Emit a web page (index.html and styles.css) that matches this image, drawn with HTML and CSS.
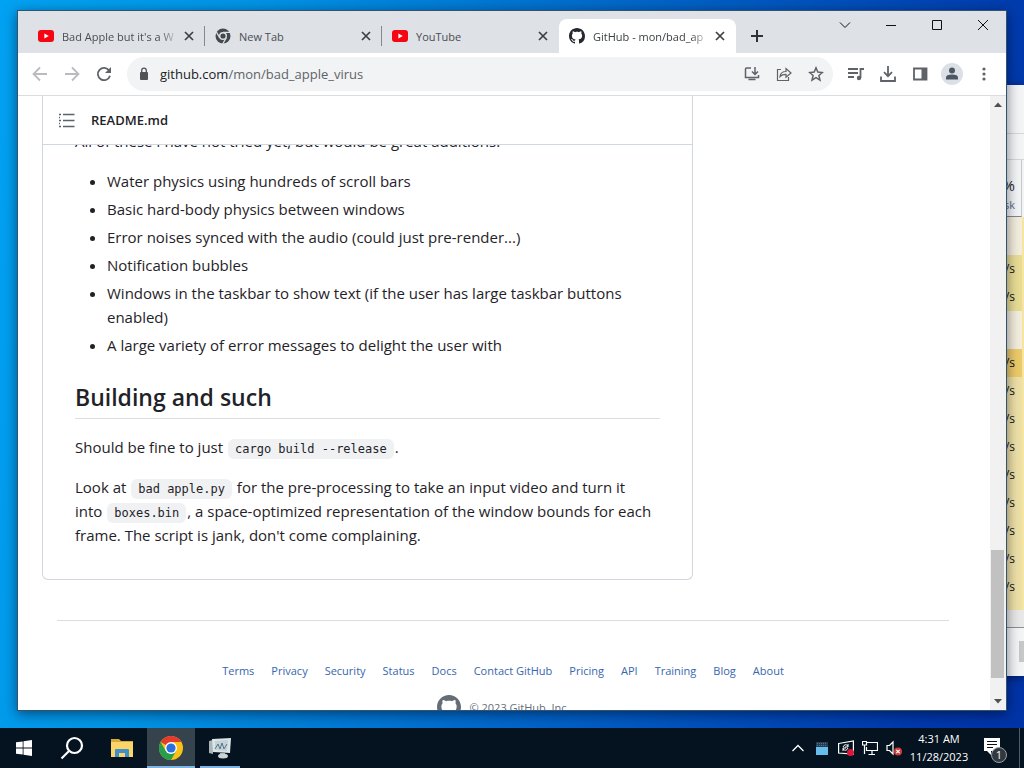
FILE: index.html
```html
<!DOCTYPE html>
<html lang="en">
<head>
<meta charset="utf-8">
<title>GitHub - mon/bad_apple_virus</title>
<link rel="stylesheet" href="styles.css">
</head>
<body>
<svg class="sprite" aria-hidden="true">
  <symbol id="youtube" viewBox="0 0 16 16"><rect y="2" width="16" height="12" rx="3" fill="#f40612"/><path d="M6.4 5.4v5.2L10.8 8z" fill="#fff"/></symbol>
  <symbol id="close" viewBox="0 0 16 16"><path d="M4 4l8 8M12 4l-8 8" stroke="#3c4043" stroke-width="1.7" fill="none"/></symbol>
  <symbol id="octocat" viewBox="0 0 16 16"><path fill="currentColor" d="M8 0C3.58 0 0 3.58 0 8c0 3.54 2.29 6.53 5.47 7.59.4.07.55-.17.55-.38 0-.19-.01-.82-.01-1.49-2.01.37-2.53-.49-2.69-.94-.09-.23-.48-.94-.82-1.13-.28-.15-.68-.52-.01-.53.63-.01 1.08.58 1.23.82.72 1.21 1.87.87 2.33.66.07-.52.28-.87.51-1.07-1.78-.2-3.64-.89-3.64-3.95 0-.87.31-1.59.82-2.15-.08-.2-.36-1.02.08-2.12 0 0 .67-.21 2.2.82.64-.18 1.32-.27 2-.27s1.36.09 2 .27c1.53-1.04 2.2-.82 2.2-.82.44 1.1.16 1.92.08 2.12.51.56.82 1.27.82 2.15 0 3.07-1.87 3.75-3.65 3.95.29.25.54.73.54 1.48 0 1.07-.01 1.93-.01 2.2 0 .21.15.46.55.38A8.01 8.01 0 0 0 16 8c0-4.42-3.58-8-8-8z"/></symbol>
</svg>

<div class="screen">
  <main class="desktop">
    <section class="monitor" aria-label="Resource monitor">
      <div class="monitor-top"></div>
      <div class="monitor-bar"></div>
      <div class="monitor-head"><span class="percent">%</span><span class="label">sk</span></div>
      <div class="cell pale"></div>
      <div class="cell mid">/s</div>
      <div class="cell mid">/s</div>
      <div class="cell pale"></div>
      <div class="cell hot">/s</div>
      <div class="cell">/s</div>
      <div class="cell">/s</div>
      <div class="cell">/s</div>
      <div class="cell">/s</div>
      <div class="cell">/s</div>
      <div class="cell">/s</div>
      <div class="cell">/s</div>
      <div class="cell">/s</div>
      <div class="cell rest"></div>
      <div class="monitor-scroll"></div>
      <div class="monitor-foot"><span class="stub"></span></div>
    </section>

    <section class="browser" aria-label="Browser">
      <header class="tabstrip">
        <div class="tabs">
          <div class="tab"><svg class="i16"><use href="#youtube"/></svg><span class="tab-title fade">Bad Apple but it's a W</span><button class="tab-close" aria-label="Close tab"><svg class="i16"><use href="#close"/></svg></button></div>
          <div class="tab"><svg class="i16" viewBox="0 0 16 16"><circle cx="8" cy="8" r="7.5" fill="#45494d"/><circle cx="8" cy="8" r="3.3" fill="#45494d" stroke="#dee1e6" stroke-width="1.4"/><path d="M8 4.3h7M4.8 9.9L1.3 3.9M11.2 9.9l-3.5 6" stroke="#dee1e6" stroke-width="1.2"/></svg><span class="tab-title">New Tab</span><button class="tab-close" aria-label="Close tab"><svg class="i16"><use href="#close"/></svg></button></div>
          <div class="tab"><svg class="i16"><use href="#youtube"/></svg><span class="tab-title">YouTube</span><button class="tab-close" aria-label="Close tab"><svg class="i16"><use href="#close"/></svg></button></div>
          <div class="tab active"><svg class="i16"><use href="#octocat"/></svg><span class="tab-title fade">GitHub - mon/bad_ap</span><button class="tab-close" aria-label="Close tab"><svg class="i16"><use href="#close"/></svg></button></div>
          <button class="new-tab" aria-label="New tab"><svg class="i16" viewBox="0 0 16 16"><path d="M8 2v12M2 8h12" stroke="#2f3235" stroke-width="2"/></svg></button>
        </div>
        <div class="caption">
          <button aria-label="Search tabs"><svg class="i16" viewBox="0 0 16 16"><path d="M3 5.500l5 5 5-5"/></svg></button>
          <button aria-label="Minimize"><svg class="i16" viewBox="0 0 16 16"><path d="M3 8.500h10"/></svg></button>
          <button aria-label="Maximize"><svg class="i16" viewBox="0 0 16 16"><path d="M3.500 3.500h9v9h-9z"/></svg></button>
          <button aria-label="Close"><svg class="i16" viewBox="0 0 16 16"><path d="M3 3l10 10M13 3L3 13"/></svg></button>
        </div>
      </header>

      <div class="toolbar">
        <div class="nav">
          <button class="faded" aria-label="Back"><svg class="i16" viewBox="0 0 16 16"><path d="M15 8H2M8 1.500L1.500 8 8 14.500"/></svg></button>
          <button class="faded" aria-label="Forward"><svg class="i16" viewBox="0 0 16 16"><path d="M1 8h13M8 1.500L14.500 8 8 14.500"/></svg></button>
          <button aria-label="Reload"><svg class="i16" viewBox="0 0 16 16"><path d="M13.200 4.500A6.200 6.200 0 1 0 14 9.800" stroke-width="2"/><path d="M15 1v6H9z" fill="#5f6368" stroke="none"/></svg></button>
        </div>
        <div class="omnibox">
          <svg class="lock" viewBox="0 0 10 14"><rect x="1" y="5" width="8" height="8" rx="1" fill="#4f5357"/><path d="M2.700 5V3.500a2.300 2.300 0 0 1 4.600 0V5" fill="none" stroke="#4f5357" stroke-width="1.300"/></svg>
          <div class="url" role="textbox" aria-label="Address" contenteditable="true" spellcheck="false">github.com<span class="path">/mon/bad_apple_virus</span></div>
          <button aria-label="Install"><svg class="i16" viewBox="0 0 16 16"><path d="M7 2H2.500Q1.500 2 1.500 3v8.500h13V9M11 1v7M8 5.500l3 3 3-3M4.500 13.500h7" stroke-width="1.500"/></svg></button>
          <button aria-label="Share"><svg class="i16" viewBox="0 0 16 16"><path d="M5 3.500H1.500v11h11V11M4 10.500c.5-3.500 3-5 6-5V2.500l5 4.500-5 4.300V8.300c-2.800 0-4.500.6-6 2.200z" stroke-width="1.200"/></svg></button>
          <button aria-label="Bookmark"><svg class="i16" viewBox="0 0 16 16"><path d="M8 1.800l1.800 4.300 4.600.4-3.500 3 1.100 4.600L8 11.700l-4 2.400 1.100-4.600-3.500-3 4.600-.4z" stroke-width="1.500"/></svg></button>
        </div>
        <div class="nav">
          <button aria-label="Media"><svg class="i16" viewBox="0 0 16 16"><path d="M0 3h10M0 7h10M0 11h6M12.500 12V3H16" stroke-width="1.700"/><circle cx="11" cy="12" r="2.200" fill="#5f6368" stroke="none"/></svg></button>
          <button aria-label="Downloads"><svg class="i16" viewBox="0 0 16 16"><path d="M8 0v10M4 6.200l4 4 4-4M1 10.500V15h14v-4.500" stroke-width="2"/></svg></button>
          <button aria-label="Side panel"><svg class="i16" viewBox="0 0 16 16"><path d="M2 2.500h12.500v11H2z" stroke-width="2"/><path d="M9.500 2h5v12h-5z" fill="#5f6368" stroke="none"/></svg></button>
          <button aria-label="Profile"><svg class="avatar" viewBox="0 0 22 22"><circle cx="11" cy="11" r="11" fill="#dbdfe6"/><circle cx="11" cy="7.500" r="3" fill="#4f5663"/><path d="M5 16.500v-2q0-3 6-3t6 3v2z" fill="#4f5663"/></svg></button>
          <button aria-label="Menu"><svg class="i16" viewBox="0 0 16 16"><g fill="#5f6368" stroke="none"><circle cx="8" cy="3" r="1.600"/><circle cx="8" cy="8" r="1.600"/><circle cx="8" cy="13" r="1.600"/></g></svg></button>
        </div>
      </div>

      <div class="viewport">
        <div class="page">
          <article class="readme">
            <header class="readme-head">
              <svg class="i16" viewBox="0 0 16 16"><path d="M4 2.500h11.500M4 8.500h11.500M4 14.500h11.500" stroke="#59636e" stroke-width="1.300"/><path d="M0 2.500h2M0 8.500h2M0 14.500h2M0 5.500h1M0 11.500h1" stroke="#59636e" stroke-width="1.500"/></svg>
              <span>README.md</span>
            </header>
            <div class="markdown">
              <p class="lead">All of these I have not tried yet, but would be great additions:</p>
              <ul>
                <li>Water physics using hundreds of scroll bars</li>
                <li>Basic hard-body physics between windows</li>
                <li>Error noises synced with the audio (could just pre-render...)</li>
                <li>Notification bubbles</li>
                <li>Windows in the taskbar to show text (if the user has large taskbar buttons enabled)</li>
                <li>A large variety of error messages to delight the user with</li>
              </ul>
              <h2>Building and such</h2>
              <p>Should be fine to just <code>cargo build --release</code>.</p>
              <p>Look at <code>bad apple.py</code> for the pre-processing to take an input video and turn it into&nbsp;<code>boxes.bin</code>, a space-optimized representation of the window bounds for each frame. The script is jank, don't come complaining.</p>
            </div>
          </article>
          <footer class="site-footer">
            <nav>
              <a href="#">Terms</a><a href="#">Privacy</a><a href="#">Security</a><a href="#">Status</a><a href="#">Docs</a><a href="#">Contact GitHub</a><a href="#">Pricing</a><a href="#">API</a><a href="#">Training</a><a href="#">Blog</a><a href="#">About</a>
            </nav>
            <div class="copyright"><svg class="mark"><use href="#octocat"/></svg><span>© 2023 GitHub, Inc.</span></div>
          </footer>
        </div>
        <div class="scrollbar">
          <button aria-label="Scroll up"><svg viewBox="0 0 16 17"><path d="M4 11h8L8 6.500z" fill="#505050"/></svg></button>
          <span class="before"></span><span class="thumb"></span><span class="after"></span>
          <button aria-label="Scroll down"><svg viewBox="0 0 16 17"><path d="M4 6h8l-4 4.500z" fill="#505050"/></svg></button>
        </div>
      </div>
    </section>
  </main>

  <footer class="taskbar">
    <button aria-label="Start"><svg class="i16" viewBox="0 0 16 16"><path fill="#fff" d="M0 2.300L6.700 1.400v6.200H0zM7.500 1.200L16 0v7.600H7.500zM0 8.400h6.700v6.200L0 13.700zM7.500 8.400H16V16l-8.500-1.200z"/></svg></button>
    <button aria-label="Search"><svg class="i24" viewBox="0 0 24 24"><circle cx="14.500" cy="9.500" r="7.500" fill="none" stroke="#fff" stroke-width="2.200"/><path d="M9 15l-7.500 7.500" stroke="#fff" stroke-width="2.200"/></svg></button>
    <div class="apps">
      <button aria-label="File Explorer"><svg class="i24" viewBox="0 0 24 24"><path d="M1 3h8l2 2h12v16H1z" fill="#d9a93a"/><path d="M1 6h22v15H1z" fill="#fbd567"/><path d="M5 21v-7q0-1 1-1h12q1 0 1 1v7h-4v-4H9v4z" fill="#3f8fc9"/><path d="M9 17h6v3H9z" fill="#fbd567"/></svg></button>
      <button class="open current" aria-label="Chrome"><svg class="i24" viewBox="0 0 24 24"><circle cx="12" cy="12" r="12" fill="#fbc116"/><path d="M12 12L1.600 6A12 12 0 0 1 22.400 6H12z" fill="#e33b2e"/><path d="M1.600 6A12 12 0 0 0 12 24l5.200-9L12 12l-5.200 3z" fill="#269e4b"/><circle cx="12" cy="12" r="6" fill="#fff"/><circle cx="12" cy="12" r="4.600" fill="#2b70dd"/></svg></button>
      <button class="open" aria-label="Resource Monitor"><svg class="i24" viewBox="0 0 24 24"><path d="M1 5l4-1v14l-4-1z" fill="#aab5b9"/><path d="M4 3l19-1-1 15-17-1z" fill="#dce4e6"/><path d="M7 5l13-1-1 11-12-1z" fill="#c3d2d8"/><path d="M7 13l3-5 2 5 2-6 2 6 3-5" fill="none" stroke="#5b7888"/><path d="M12 17h5v2h-5z" fill="#9eabb0"/><ellipse cx="15" cy="20" rx="5" ry="2.500" fill="#cbd3d4"/></svg></button>
    </div>
    <div class="tray">
      <button aria-label="Show hidden icons"><svg class="i16" viewBox="0 0 16 16"><path d="M2.500 11L8 5.500l5.500 5.500" fill="none" stroke="#fff" stroke-width="1.300"/></svg></button>
      <button aria-label="System usage"><svg class="i16" viewBox="0 0 16 16"><path d="M2 2h12v13H2z" fill="#65bfea"/><path d="M2 2h12v5H2z" fill="#253c55"/><path d="M3 3.500h10M3 5.500h10" stroke="#70879a" stroke-width=".7" stroke-dasharray="1 1"/></svg></button>
      <button aria-label="Update status"><svg class="i16" viewBox="0 0 16 16"><path d="M.6 3.500L15.400 1v13L.6 13z" fill="none" stroke="#fff" stroke-width="1.200"/><path d="M5 7q2-4 5-1M10 4v3H7M10 8q-2 4-5 1M5 11V8h3" fill="none" stroke="#fff"/><circle cx="12.500" cy="12.500" r="3.500" fill="#dc173b"/></svg></button>
      <button aria-label="Network"><svg class="i16" viewBox="0 0 16 16"><path d="M5 2.500h10.500v8H4.500V7M10 10.500v4M6.500 14.500H13M.5 1.500h4V5h-4zM2.500 5v9" fill="none" stroke="#fff" stroke-width="1.200"/></svg></button>
      <button aria-label="Volume"><svg class="i16" viewBox="0 0 16 16"><path d="M1 5.500h2.500L7 2v12l-3.500-3.500H1z" fill="none" stroke="#fff" stroke-width="1.200"/><circle cx="12" cy="11.500" r="4" fill="#d43c3c"/><path d="M10.300 9.800l3.400 3.400M13.700 9.800l-3.400 3.400" stroke="#fff" stroke-width="1.200"/></svg></button>
      <div class="clock"><time>4:31 AM</time><time>11/28/2023</time></div>
      <button class="notes" aria-label="Notifications"><svg viewBox="0 0 26 26"><path d="M1 3h16v13H8v4l-4-4H1z" fill="#fff"/><path d="M4 6.500h10M4 9.500h10M4 12.500h6" stroke="#09121b" stroke-width="1.200"/></svg><span class="badge">1</span></button>
      <span class="peek"></span>
    </div>
  </footer>
</div>
</body>
</html>
```

FILE: styles.css
```css
* { box-sizing: border-box; }

body {
  margin: 0;
  color: #1f2328;
  font-family: "Open Sans", "Noto Sans", sans-serif;
  font-size: 11px;
}

button {
  display: flex;
  align-items: center;
  justify-content: center;
  flex: none;
  margin: 0;
  padding: 0;
  border: 0;
  background: none;
  font: inherit;
}

svg { display: block; flex: none; }
.sprite { position: absolute; width: 0; height: 0; }
.i16 { width: 16px; height: 16px; }
.i24 { width: 24px; height: 24px; }

.screen {
  display: flex;
  flex-direction: column;
  height: 100vh;
  overflow: hidden;
}

.desktop {
  position: relative;
  flex: 1;
  min-height: 0;
  overflow: hidden;
  background: linear-gradient(100deg, #02a2f2 0%, #0294e6 22%, #0078d4 42%, #0053bd 70%, #0039ac 90%, #0033a6 100%);
}

/* Resource monitor, mostly behind the browser */
.monitor {
  position: absolute;
  top: 85px;
  right: 0;
  bottom: 52px;
  width: 24px;
  display: flex;
  flex-direction: column;
  overflow: hidden;
  background: #f4f5f7;
  box-shadow: 0 2px 10px rgba(0, 0, 30, .5);
}
.monitor-top { height: 49px; border-bottom: 1px solid #d5d7da; }
.monitor-bar { height: 26px; border-bottom: 1px solid #d5d7da; }
.monitor-head {
  display: flex;
  flex-direction: column;
  align-items: flex-end;
  height: 57px;
  margin-right: 2px;
  padding: 15px 6px 0 0;
  border-right: 1px solid #c4c8cc;
  border-bottom: 1px solid #85878a;
  line-height: 20px;
}
.percent { font-size: 15px; }
.label { color: #576f86; }
.cell {
  flex: none;
  height: 28px;
  padding-right: 7px;
  border-right: 2px solid #f7e6a1;
  background: #eee1a7;
  color: #111;
  font-size: 12px;
  line-height: 28px;
  text-align: right;
}
.cell.pale { height: 38px; background: #f2eddc; }
.cell.mid { background: #e9dd95; }
.cell.hot { background: #eccb6b; }
.cell.rest { flex: 1; min-height: 0; }
.monitor-scroll { height: 18px; flex: none; background: #e9e9e9; border-bottom: 1px solid #8d9094; }
.monitor-foot { display: flex; justify-content: flex-end; height: 48px; flex: none; padding-top: 13px; }
.stub { width: 5px; height: 21px; background: #c6c8ca; }

/* Browser window */
.browser {
  position: absolute;
  inset: 10px 17px 17px 17px;
  display: flex;
  flex-direction: column;
  border: 1px solid #31536f;
  background: #fff;
  box-shadow: 0 3px 12px rgba(0, 0, 20, .5);
}

.tabstrip {
  display: flex;
  justify-content: space-between;
  height: 42px;
  flex: none;
  background: #dee1e6;
}
.tabs { display: flex; flex: 1; min-width: 0; padding: 8px 0 0 10px; }
.tab {
  display: flex;
  align-items: center;
  gap: 8px;
  flex: 0 1 177px;
  min-width: 0;
  padding: 0 8px 0 10px;
  color: #4a4d51;
}
.tab:not(.active) { background: linear-gradient(#85888c, #85888c) right center / 1px 20px no-repeat; }
.tab:nth-child(3) { background: none; }
.tab.active { border-radius: 8px 8px 0 0; background: #fff; color: #3c4043; }
.tab.active > svg { color: #24292f; }
.tab-title {
  flex: 1;
  min-width: 0;
  overflow: hidden;
  white-space: nowrap;
}
.fade {
  -webkit-mask-image: linear-gradient(90deg, #000 85%, transparent);
  mask-image: linear-gradient(90deg, #000 85%, transparent);
}
.tab-close { width: 16px; margin-left: -5px; }
.new-tab { width: 42px; }
.caption { display: flex; height: 28px; flex: none; }
.caption button { width: 46px; }
.caption path { fill: none; stroke: #111; }

.toolbar {
  display: flex;
  align-items: center;
  gap: 7px;
  flex: none;
  height: 43px;
  padding: 0 6px;
  border-bottom: 1px solid #dadce0;
}
.nav { display: flex; }
.nav button, .omnibox button { width: 32px; height: 32px; }
.toolbar button path { fill: none; stroke: #5f6368; stroke-width: 1.8; }
.toolbar button path[stroke="none"] { fill: #5f6368; stroke: none; }
.toolbar button path[stroke-width="1.200"] { stroke-width: 1.2; }
.toolbar button path[stroke-width="1.500"] { stroke-width: 1.5; }
.toolbar button .avatar path { fill: #4f5663; stroke: none; }
.toolbar .faded path { stroke: #b9bbbe; }
.avatar { width: 22px; height: 22px; }
.omnibox {
  display: flex;
  align-items: center;
  flex: 1;
  min-width: 0;
  height: 34px;
  padding: 0 1px 0 12px;
  border-radius: 17px;
  background: #f1f3f4;
}
.lock { width: 10px; height: 14px; }
.url {
  flex: 1;
  min-width: 0;
  margin-left: 11px;
  overflow: hidden;
  white-space: nowrap;
  color: #202124;
  font-size: 13px;
}
.path { color: #5f6368; }

.viewport { display: flex; flex: 1; min-height: 0; }
.page { flex: 1; min-width: 0; overflow: hidden; }
.readme {
  margin: 0 297px 0 24px;
  border: 1px solid #d0d7de;
  border-top: 0;
  border-radius: 0 0 6px 6px;
}
.readme-head {
  position: relative;
  display: flex;
  align-items: center;
  gap: 16px;
  height: 49px;
  padding: 0 16px;
  border-bottom: 1px solid #d0d7de;
  background: #fff;
  font-size: 13px;
  font-weight: 600;
}
.markdown { padding: 0 32px 32px; font-size: 15px; line-height: 24px; }
.markdown p { margin: 0 0 16px; }
.markdown p.lead { margin-top: -16px; }
.markdown p:last-child { margin-bottom: 0; }
.markdown ul { margin: 0; padding-left: 32px; }
.markdown li + li { margin-top: 4px; }
.markdown h2 {
  margin: 25px 0 16px;
  padding-bottom: 6px;
  border-bottom: 1px solid #d8dee4;
  font-size: 23px;
  font-weight: 600;
  line-height: 30px;
}
.markdown code {
  margin: 0 1px;
  padding: 3px 7px;
  border-radius: 6px;
  background: #f0f1f3;
  font-family: "DejaVu Sans Mono", "Liberation Mono", monospace;
  font-size: 12px;
  line-height: 16px;
}

.site-footer { margin: 40px 41px 0 39px; padding-top: 40px; border-top: 1px solid #d8dee4; }
.site-footer nav { display: flex; justify-content: center; gap: 17px; line-height: 20px; }
.site-footer a { color: #3766ae; text-decoration: none; }
.copyright {
  display: flex;
  align-items: center;
  justify-content: center;
  gap: 9px;
  margin-top: 14px;
  color: #656d76;
}
.mark { width: 24px; height: 24px; }

.scrollbar { display: flex; flex-direction: column; width: 16px; flex: none; background: #f1f1f1; }
.scrollbar button, .scrollbar svg { width: 16px; height: 17px; }
.before { flex: 437; }
.thumb { flex: 128; margin: 0 2px 0 1px; background: #c1c1c1; }
.after { flex: 15; }

/* Taskbar */
.taskbar { display: flex; flex: none; height: 40px; background: #04131f; color: #fff; }
.taskbar > button, .apps button { width: 48px; }
.apps { display: flex; gap: 1px; margin-left: 2px; }
.apps .open { background: linear-gradient(#7db4e4, #7db4e4) center bottom / 40px 2px no-repeat; }
.apps .current { background: linear-gradient(#7db4e4, #7db4e4) center bottom / 48px 2px no-repeat #34434c; }
.tray { display: flex; margin-left: auto; }
.tray > button { width: 24px; }
.clock {
  display: flex;
  flex-direction: column;
  align-items: center;
  justify-content: center;
  width: 66px;
  line-height: 18px;
}
.tray > .notes { position: relative; width: 47px; }
.notes svg { width: 26px; height: 26px; }
.badge {
  position: absolute;
  right: 12px;
  bottom: 5px;
  width: 16px;
  height: 16px;
  border: 1px solid #9aa0a5;
  border-radius: 50%;
  background: #32383d;
  color: #fff;
  line-height: 14px;
}
.peek { width: 5px; border-left: 1px solid #4f5b65; }
```
